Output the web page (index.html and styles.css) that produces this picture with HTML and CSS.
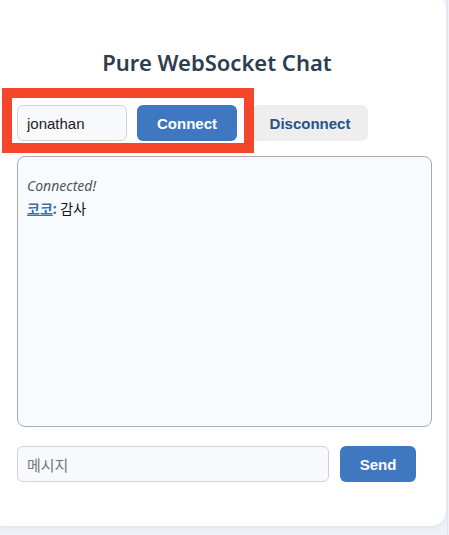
FILE: index.html
```html
<html>
<head>
    <title>Pure WebSocket Chat</title>
    <meta charset="utf-8" />
    <link rel="stylesheet" href="styles.css">
</head>
<body>

<div class="page">
    <div class="card">
        <h1 class="title">Pure WebSocket Chat</h1>

        <div class="controls">
            <input class="field name" type="text" value="jonathan" />
            <button class="btn primary connect">Connect</button>
            <button class="btn secondary">Disconnect</button>
        </div>

        <div class="log">
            <div class="msg system">Connected!</div>
            <div class="msg"><a class="who" href="#">코코</a><b class="colon">:</b> 감사</div>
        </div>

        <div class="composer">
            <input class="field message" type="text" placeholder="메시지" />
            <button class="btn primary send">Send</button>
        </div>
    </div>

    <div class="highlight"></div>
</div>

</body>
</html>
```

FILE: styles.css
```css
html, body {
    margin: 0;
    padding: 0;
}

body {
    background: #eef1f5;
    font-family: "Liberation Sans", Arial, sans-serif;
}

.page {
    position: relative;
    width: 447px;
    height: 535px;
    border-right: 1px solid #d9e3f2;
    overflow: hidden;
}

.card {
    width: 446px;
    height: 532px;
    margin-top: -6px;
    box-sizing: border-box;
    padding: 53px 14px 0 17px;
    background: #fff;
    border-radius: 0 16px 16px 0;
    box-shadow: 0 2px 6px rgba(0, 0, 0, 0.05);
}

.title {
    margin: 0 15px 0 0;
    text-align: center;
    font-family: "Noto Sans", sans-serif;
    font-weight: 600;
    font-size: 22px;
    line-height: 30px;
    color: #2c3e50;
}

.controls {
    display: flex;
    align-items: center;
    margin-top: 28px;
}

.field {
    box-sizing: border-box;
    height: 36px;
    padding: 0 9px;
    border: 1px solid #cfd3d8;
    border-radius: 6px;
    background: #f8f9fc;
    font-family: "Liberation Sans", Arial, sans-serif;
    font-size: 15px;
    color: #222;
    outline: none;
}

.field::placeholder {
    color: #777;
    font-family: "Noto Sans CJK KR", sans-serif;
}

.name {
    width: 110px;
}

.btn {
    height: 36px;
    border: none;
    border-radius: 6px;
    font-family: "Liberation Sans", Arial, sans-serif;
    font-weight: bold;
    font-size: 15px;
    cursor: pointer;
}

.primary {
    background: #3f78c1;
    color: #fff;
}

.secondary {
    background: #eeeeee;
    color: #27528c;
}

.connect {
    width: 100px;
    margin-left: 10px;
}

.secondary {
    width: 116px;
    margin-left: 15px;
}

.log {
    box-sizing: border-box;
    width: 415px;
    height: 271px;
    margin-top: 15px;
    padding: 18px 9px;
    border: 1px solid #a9abae;
    border-radius: 8px;
    background: #f8fbfd;
    font-family: "Noto Sans", "Noto Sans CJK KR", sans-serif;
    font-size: 14px;
    line-height: 22px;
    color: #111;
}

.system {
    font-style: italic;
    color: #555;
}

.who {
    color: #3a6fb5;
    font-weight: bold;
    font-family: "Noto Sans CJK KR", sans-serif;
}

.colon {
    color: #3a6fb5;
}

.composer {
    display: flex;
    align-items: center;
    margin-top: 19px;
}

.message {
    width: 312px;
    font-family: "Noto Sans CJK KR", sans-serif;
}

.send {
    width: 76px;
    margin-left: 11px;
}

/* annotation frame drawn over the name row */
.highlight {
    position: absolute;
    left: 2px;
    top: 88px;
    width: 252px;
    height: 65px;
    box-sizing: border-box;
    border: 10px solid #f4472a;
}
```
